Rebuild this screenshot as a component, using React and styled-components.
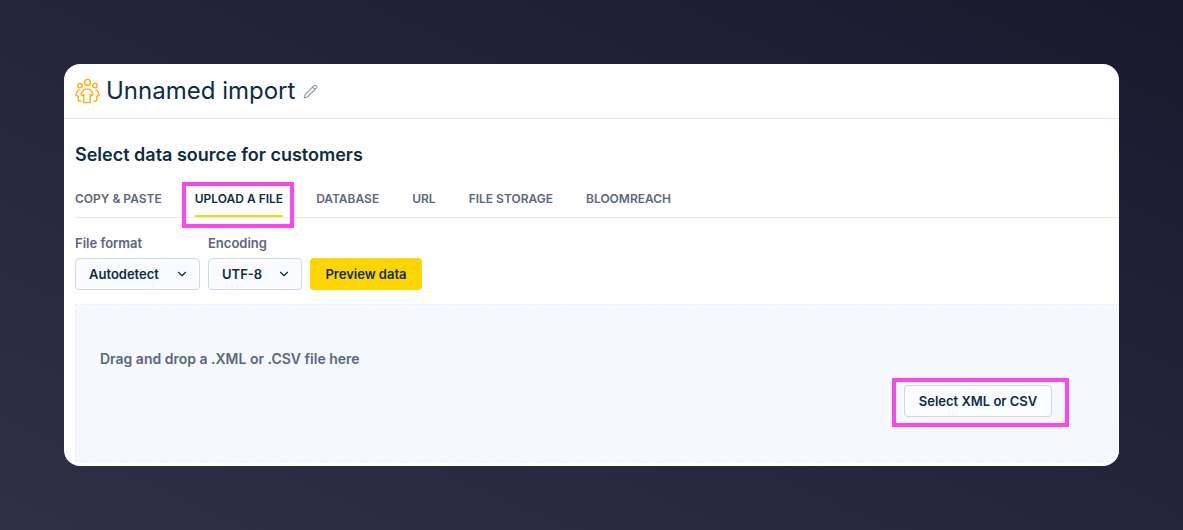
import React from "react"
import styled, { createGlobalStyle } from "styled-components"
import { ChevronDown, Pencil } from "lucide-react"

const tabs = ["COPY & PASTE", "UPLOAD A FILE", "DATABASE", "URL", "FILE STORAGE", "BLOOMREACH"]

const CustomersIcon = () => (
  <svg width="25" height="26" viewBox="0 0 25 26" fill="none" stroke="#ffa800" strokeWidth="1.3" strokeLinecap="round" strokeLinejoin="round">
    <circle cx="12.5" cy="4.4" r="3" />
    <circle cx="5" cy="7.6" r="2.3" />
    <circle cx="20" cy="7.6" r="2.3" />
    <path d="M9.8 24.6h5.4v-8.2l1.6 1.3 1.3-1.6-2.7-4a2.2 2.2 0 0 0-1.8-1h-3.2a2.2 2.2 0 0 0-1.8 1l-2.7 4 1.3 1.6 1.6-1.3v8.2z" />
    <path d="M4.2 11.8c-1 .2-1.8.9-2.2 1.8l-1.2 3.6 2.4 1.2v3.4c0 .8.6 1.3 1.4 1.3h1.6" />
    <path d="M20.8 11.8c1 .2 1.8.9 2.2 1.8l1.2 3.6-2.4 1.2v3.4c0 .8-.6 1.3-1.4 1.3h-1.6" />
  </svg>
)

const App = () => (
  <>
    <GlobalStyle />
    <Page>
      <Card>
        <Header>
          <CustomersIcon />
          <Title>Unnamed import</Title>
          <EditIcon size={15} strokeWidth={1.75} />
        </Header>
        <Content>
          <Heading>Select data source for customers</Heading>
          <TabBar>
            {tabs.map((tab) => (
              <Tab key={tab} $active={tab === "UPLOAD A FILE"}>
                {tab}
                {tab === "UPLOAD A FILE" && <TabHighlight />}
              </Tab>
            ))}
          </TabBar>
          <Controls>
            <Field>
              <Label>File format</Label>
              <Select $width={125}>
                Autodetect
                <ChevronDown size={14} strokeWidth={2} />
              </Select>
            </Field>
            <Field>
              <Label>Encoding</Label>
              <Select $width={94}>
                UTF-8
                <ChevronDown size={14} strokeWidth={2} />
              </Select>
            </Field>
            <PreviewButton>Preview data</PreviewButton>
          </Controls>
          <DropZone>
            <DropText>Drag and drop a .XML or .CSV file here</DropText>
            <SelectButton>
              Select XML or CSV
              <ButtonHighlight />
            </SelectButton>
          </DropZone>
        </Content>
      </Card>
    </Page>
  </>
)

const GlobalStyle = createGlobalStyle`
  * {
    box-sizing: border-box;
  }
  body {
    margin: 0;
    font-family: Inter, "Liberation Sans", sans-serif;
    color: #0b2d45;
  }
`

const Page = styled.div`
  width: 1183px;
  height: 530px;
  padding: 64px;
  background: linear-gradient(to top right, #2f2f48 0%, #19192e 100%);
  overflow: hidden;
`

const Card = styled.div`
  width: 1055px;
  height: 402px;
  background: #fff;
  border-radius: 16px;
  overflow: hidden;
`

const Header = styled.div`
  height: 55px;
  padding: 0 0 1px 11px;
  display: flex;
  align-items: center;
  border-bottom: 1px solid #e1ebf8;
`

const Title = styled.h1`
  margin: 0 0 0 6px;
  font-size: 24px;
  line-height: 30px;
  font-weight: 400;
  color: #0b2d45;
`

const EditIcon = styled(Pencil)`
  margin: 2px 0 0 8px;
  color: #8a97b4;
`

const Content = styled.div`
  padding: 26px 0 0 11px;
`

const Heading = styled.h2`
  margin: 0;
  font-size: 18px;
  line-height: 20px;
  font-weight: 600;
  color: #0b2d45;
`

const TabBar = styled.div`
  margin-top: 16px;
  height: 37px;
  display: flex;
  gap: 33px;
  border-bottom: 1px solid #e1ebf8;
`

const Tab = styled.div`
  position: relative;
  height: 36px;
  padding-top: 10px;
  font-size: 12px;
  line-height: 15px;
  font-weight: 600;
  color: ${(p) => (p.$active ? "#0b2d45" : "#5a6781")};
  border-bottom: 2px solid ${(p) => (p.$active ? "#ffd500" : "transparent")};
`

const TabHighlight = styled.span`
  position: absolute;
  top: 1px;
  left: -13px;
  right: -11px;
  height: 46px;
  border: 4px solid #ff44f2;
`

const Controls = styled.div`
  margin-top: 17px;
  display: flex;
  align-items: flex-end;
  gap: 8px;
`

const Field = styled.div`
  display: flex;
  flex-direction: column;
  gap: 7px;
`

const Label = styled.label`
  font-size: 13px;
  line-height: 16px;
  font-weight: 600;
  color: #5a6781;
`

const Select = styled.div`
  width: ${(p) => p.$width}px;
  height: 32px;
  padding: 0 10px 0 13px;
  display: flex;
  align-items: center;
  justify-content: space-between;
  font-size: 13px;
  font-weight: 600;
  color: #0b2d45;
  background: #f9fbff;
  border: 1px solid #cbd8ee;
  border-radius: 4px;
`

const PreviewButton = styled.button`
  width: 112px;
  height: 32px;
  padding: 0;
  font-family: inherit;
  font-size: 13px;
  font-weight: 600;
  color: #0b2d45;
  background: #ffd500;
  border: none;
  border-radius: 4px;
`

const DropZone = styled.div`
  margin-top: 14px;
  height: 158px;
  padding: 46px 67px 0 24px;
  display: flex;
  flex-direction: column;
  background: #f5f8fe;
  border: 1px dashed #e9eef8;
  border-right: none;
`

const DropText = styled.div`
  font-size: 14px;
  line-height: 16px;
  font-weight: 600;
  color: #5a6781;
`

const SelectButton = styled.button`
  position: relative;
  align-self: flex-end;
  margin-top: 18px;
  width: 148px;
  height: 32px;
  padding: 0;
  font-family: inherit;
  font-size: 13px;
  font-weight: 600;
  color: #0b2d45;
  background: #fbfcff;
  border: 1px solid #cbd8ee;
  border-radius: 4px;
`

const ButtonHighlight = styled.span`
  position: absolute;
  top: -8px;
  left: -13px;
  width: 177px;
  height: 49px;
  border: 4px solid #ff44f2;
`

export default App
